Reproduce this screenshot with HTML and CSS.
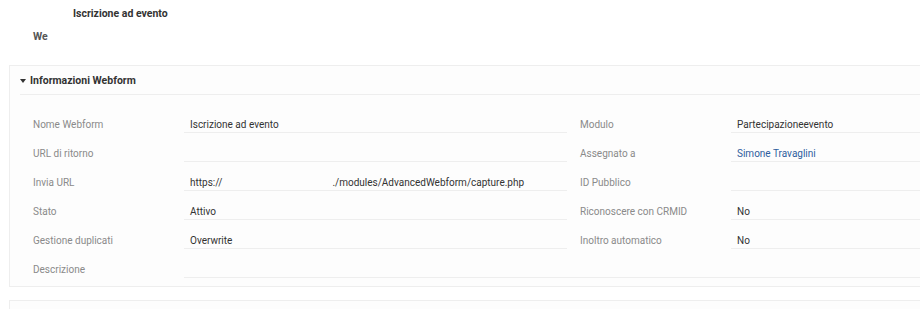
FILE: index.html
```html
<!DOCTYPE html>
<html lang="it">
<head>
<meta charset="UTF-8" />
<title>Iscrizione ad evento</title>
<link rel="stylesheet" href="styles.css">
</head>
<body>

<div class="top-title">Iscrizione ad evento</div>
<div class="sub-title">We</div>

<div class="panel">
  <div class="panel-head">
    <span class="caret"></span>
    <span class="panel-title">Informazioni Webform</span>
  </div>

  <div class="fields">
    <div class="lbl">Nome Webform</div>
    <div class="val">Iscrizione ad evento</div>
    <div class="lbl">Modulo</div>
    <div class="val">Partecipazioneevento</div>

    <div class="lbl">URL di ritorno</div>
    <div class="val"></div>
    <div class="lbl">Assegnato a</div>
    <div class="val"><a href="#">Simone Travaglini</a></div>

    <div class="lbl">Invia URL</div>
    <div class="val">https://<span class="hidden-host"></span>./modules/AdvancedWebform/capture.php</div>
    <div class="lbl">ID Pubblico</div>
    <div class="val"></div>

    <div class="lbl">Stato</div>
    <div class="val">Attivo</div>
    <div class="lbl">Riconoscere con CRMID</div>
    <div class="val">No</div>

    <div class="lbl">Gestione duplicati</div>
    <div class="val">Overwrite</div>
    <div class="lbl">Inoltro automatico</div>
    <div class="val">No</div>

    <div class="lbl">Descrizione</div>
    <div class="val"></div>
    <div class="val empty-wide"></div>
  </div>
</div>

<div class="panel next"></div>

</body>
</html>
```

FILE: styles.css
```css
* {
  box-sizing: border-box;
}
body {
  margin: 0;
  font-family: Roboto, 'Noto Sans', sans-serif;
  font-size: 10px;
  color: #333;
  background: #fff;
  overflow: hidden;
}
.top-title {
  padding: 7px 0 0 73px;
  line-height: 14px;
  font-size: 10.5px;
  font-weight: 700;
  color: #333;
}
.sub-title {
  padding: 9px 0 0 33px;
  line-height: 14px;
  font-size: 10.5px;
  font-weight: 700;
  color: #555;
}
.panel {
  margin: 21px -20px 0 9px;
  border: 1px solid #eee;
  background: #fdfdfd;
  padding: 0 0 8px 10px;
}
.panel-head {
  display: flex;
  align-items: center;
  height: 29px;
  padding-top: 1px;
  border-bottom: 1px solid #eee;
}
.caret {
  width: 0;
  height: 0;
  margin: 1px 4px 0 0;
  border-left: 3.5px solid transparent;
  border-right: 3.5px solid transparent;
  border-top: 4px solid #333;
}
.panel-title {
  font-size: 10.5px;
  font-weight: 700;
  color: #333;
}
.fields {
  display: grid;
  grid-template-columns: 164px 383px 164px 1fr;
  margin-top: 9px;
}
.lbl,
.val {
  height: 29px;
  display: flex;
  align-items: flex-end;
  line-height: 14px;
  border-bottom: 1px solid transparent;
}
.lbl {
  padding-left: 13px;
  color: #8a8a8a;
}
.val {
  padding-left: 6px;
  border-bottom-color: #eee;
  color: #333;
}
.val a {
  color: #2f5d9e;
  text-decoration: none;
}
.hidden-host {
  display: inline-block;
  width: 110px;
}
.empty-wide {
  grid-column: span 2;
}
.panel.next {
  margin-top: 13px;
  height: 9px;
  padding: 0;
  border-bottom: none;
}
```
